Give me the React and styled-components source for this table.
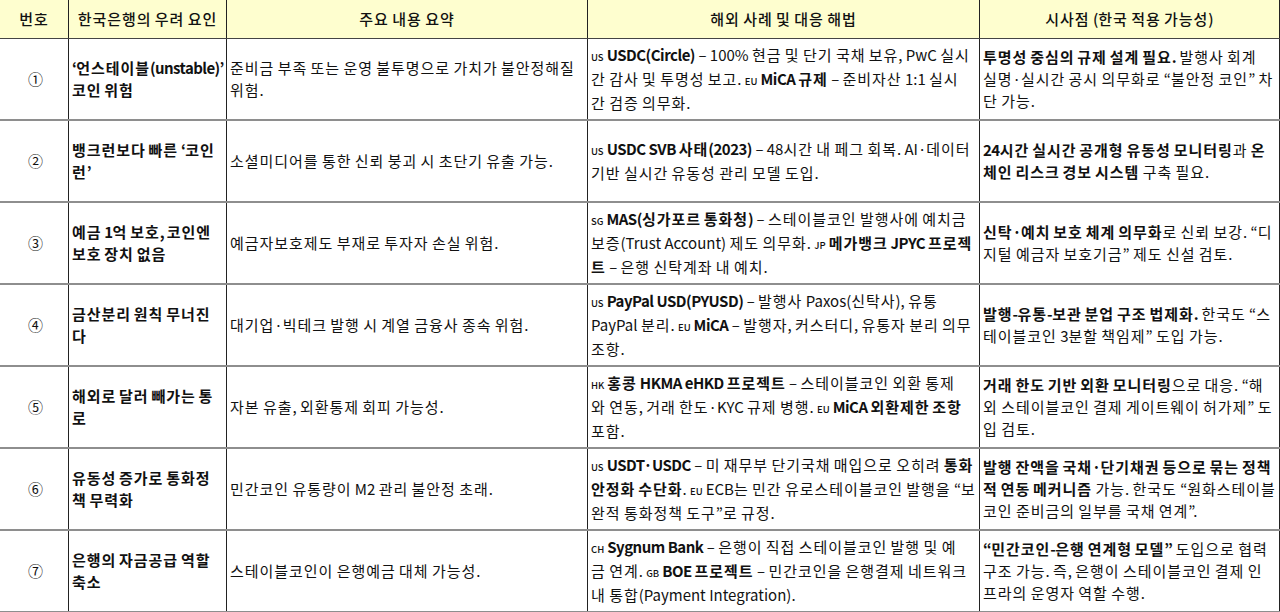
import React from 'react';
import styled, { createGlobalStyle } from 'styled-components';

const GlobalStyle = createGlobalStyle`
    html, body {
        margin: 0;
        padding: 0;
        background: #fff;
    }
    body {
        font-family: "Noto Sans CJK KR", "Noto Sans", sans-serif;
        color: #111;
    }
`;

const Frame = styled.div`
    width: 1280px;
    height: 612px;
    overflow: hidden;
`;

const Table = styled.table`
    border-collapse: collapse;
    table-layout: fixed;
    width: 1280px;
    margin: -1px 0 0 -1px;
    font-size: 15px;
    line-height: 22px;
    letter-spacing: 0;
`;

const HeadCell = styled.th`
    height: 38px;
    padding: 0 4px;
    background: #fefecf;
    font-weight: 500;
    text-align: center;
    vertical-align: middle;
    border-left: 1px solid #222;
    border-right: 1px solid #222;
    border-top: 1px solid #222;
    border-bottom: 1px solid #444;
`;

const Cell = styled.td`
    height: 80px;
    padding: 0 0 0 3px;
    vertical-align: middle;
    text-align: ${props => (props.center ? 'center' : 'left')};
    font-weight: ${props => (props.bold ? 700 : 400)};
    letter-spacing: ${props => (props.bold ? '-0.6px' : '0')};
    border-left: 1px solid #222;
    border-right: 1px solid #222;
    border-bottom: 2px solid #8e8e8e;
    overflow: hidden;
`;

const Line = styled.span`
    display: block;
    white-space: nowrap;
`;

// Hangul in the reference font runs wider than in Noto CJK; Latin does not.
const Hangul = styled.span`
    letter-spacing: 0.95px;
`;

const Strong = styled.b`
    font-weight: 700;
    letter-spacing: -0.5px;
`;

const Flag = styled.span`
    font-size: 9.5px;
    font-weight: 500;
    letter-spacing: 0;
    margin-right: 3px;
`;

const HANGUL = /([\u1100-\u11FF\u3130-\u318F\uAC00-\uD7AF]+)/;

const Text = ({ children }) =>
    children.split(HANGUL).map((part, i) =>
        i % 2 === 1 ? <Hangul key={i}>{part}</Hangul> : part
    );

// markup: **bold**, [US] flag; each array item is one line as in the sheet
const Inline = ({ source }) =>
    source.split(/(\*\*.+?\*\*|\[[A-Z]{2}\])/).map((part, i) => {
        if (part.startsWith('**')) return <Strong key={i}><Text>{part.slice(2, -2)}</Text></Strong>;
        if (/^\[[A-Z]{2}\]$/.test(part)) return <Flag key={i}>{part.slice(1, -1)}</Flag>;
        return part ? <Text key={i}>{part}</Text> : null;
    });

const Lines = ({ lines }) =>
    lines.map((line, i) => (
        <Line key={i}><Inline source={line} /></Line>
    ));

const columns = [
    { title: '번호', width: 69 },
    { title: '한국은행의 우려 요인', width: 158 },
    { title: '주요 내용 요약', width: 361 },
    { title: '해외 사례 및 대응 해법', width: 392 },
    { title: '시사점 (한국 적용 가능성)', width: 300 }
];

const rows = [
    {
        num: '①',
        risk: ['‘언스테이블(unstable)’', '코인 위험'],
        summary: ['준비금 부족 또는 운영 불투명으로 가치가 불안정해질', '위험.'],
        cases: [
            '[US]**USDC(Circle)** – 100% 현금 및 단기 국채 보유, PwC 실시',
            '간 감사 및 투명성 보고. [EU]**MiCA 규제** – 준비자산 1:1 실시',
            '간 검증 의무화.'
        ],
        insight: [
            '**투명성 중심의 규제 설계 필요.** 발행사 회계',
            '실명·실시간 공시 의무화로 “불안정 코인” 차',
            '단 가능.'
        ]
    },
    {
        num: '②',
        risk: ['뱅크런보다 빠른 ‘코인', '런’'],
        summary: ['소셜미디어를 통한 신뢰 붕괴 시 초단기 유출 가능.'],
        cases: [
            '[US]**USDC SVB 사태(2023)** – 48시간 내 페그 회복. AI·데이터',
            '기반 실시간 유동성 관리 모델 도입.'
        ],
        insight: [
            '**24시간 실시간 공개형 유동성 모니터링**과 **온**',
            '**체인 리스크 경보 시스템** 구축 필요.'
        ]
    },
    {
        num: '③',
        risk: ['예금 1억 보호, 코인엔', '보호 장치 없음'],
        summary: ['예금자보호제도 부재로 투자자 손실 위험.'],
        cases: [
            '[SG]**MAS(싱가포르 통화청)** – 스테이블코인 발행사에 예치금',
            '보증(Trust Account) 제도 의무화. [JP]**메가뱅크 JPYC 프로젝**',
            '**트** – 은행 신탁계좌 내 예치.'
        ],
        insight: [
            '**신탁·예치 보호 체계 의무화**로 신뢰 보강. “디',
            '지털 예금자 보호기금” 제도 신설 검토.'
        ]
    },
    {
        num: '④',
        risk: ['금산분리 원칙 무너진', '다'],
        summary: ['대기업·빅테크 발행 시 계열 금융사 종속 위험.'],
        cases: [
            '[US]**PayPal USD(PYUSD)** – 발행사 Paxos(신탁사), 유통',
            'PayPal 분리. [EU]**MiCA** – 발행자, 커스터디, 유통자 분리 의무',
            '조항.'
        ],
        insight: [
            '**발행-유통-보관 분업 구조 법제화.** 한국도 “스',
            '테이블코인 3분할 책임제” 도입 가능.'
        ]
    },
    {
        num: '⑤',
        risk: ['해외로 달러 빼가는 통', '로'],
        summary: ['자본 유출, 외환통제 회피 가능성.'],
        cases: [
            '[HK]**홍콩 HKMA eHKD 프로젝트** – 스테이블코인 외환 통제',
            '와 연동, 거래 한도·KYC 규제 병행. [EU]**MiCA 외환제한 조항**',
            '포함.'
        ],
        insight: [
            '**거래 한도 기반 외환 모니터링**으로 대응. “해',
            '외 스테이블코인 결제 게이트웨이 허가제” 도',
            '입 검토.'
        ]
    },
    {
        num: '⑥',
        risk: ['유동성 증가로 통화정', '책 무력화'],
        summary: ['민간코인 유통량이 M2 관리 불안정 초래.'],
        cases: [
            '[US]**USDT·USDC** – 미 재무부 단기국채 매입으로 오히려 **통화**',
            '**안정화 수단화**. [EU]ECB는 민간 유로스테이블코인 발행을 “보',
            '완적 통화정책 도구”로 규정.'
        ],
        insight: [
            '**발행 잔액을 국채·단기채권 등으로 묶는 정책**',
            '**적 연동 메커니즘** 가능. 한국도 “원화스테이블',
            '코인 준비금의 일부를 국채 연계”.'
        ]
    },
    {
        num: '⑦',
        risk: ['은행의 자금공급 역할', '축소'],
        summary: ['스테이블코인이 은행예금 대체 가능성.'],
        cases: [
            '[CH]**Sygnum Bank** – 은행이 직접 스테이블코인 발행 및 예',
            '금 연계. [GB]**BOE 프로젝트** – 민간코인을 은행결제 네트워크',
            '내 통합(Payment Integration).'
        ],
        insight: [
            '**“민간코인-은행 연계형 모델”** 도입으로 협력',
            '구조 가능. 즉, 은행이 스테이블코인 결제 인',
            '프라의 운영자 역할 수행.'
        ]
    }
];

const App = () => {
    return (
        <Frame>
            <GlobalStyle />
            <Table>
                <colgroup>
                    {columns.map((col, index) => (
                        <col key={index} style={{ width: col.width }} />
                    ))}
                </colgroup>
                <thead>
                    <tr>
                        {columns.map((col, index) => (
                            <HeadCell key={index}><Text>{col.title}</Text></HeadCell>
                        ))}
                    </tr>
                </thead>
                <tbody>
                    {rows.map((row, index) => (
                        <tr key={index}>
                            <Cell center>{row.num}</Cell>
                            <Cell bold><Lines lines={row.risk} /></Cell>
                            <Cell><Lines lines={row.summary} /></Cell>
                            <Cell><Lines lines={row.cases} /></Cell>
                            <Cell><Lines lines={row.insight} /></Cell>
                        </tr>
                    ))}
                </tbody>
            </Table>
        </Frame>
    );
};

export default App;
